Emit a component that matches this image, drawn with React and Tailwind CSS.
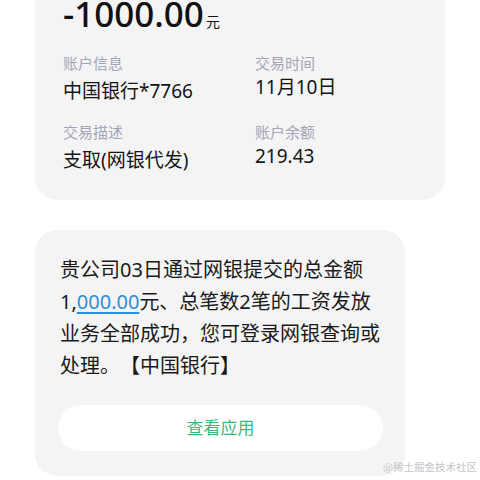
import React from 'react';

const font = { fontFamily: '"Noto Sans", "Noto Sans CJK SC", sans-serif' };

const fields = [
  { label: '账户信息', value: '中国银行*7766', shift: 'mt-[4px]' },
  { label: '交易时间', value: '11月10日', shift: 'mt-0' },
  { label: '交易描述', value: '支取(网银代发)', shift: 'mt-[4px]' },
  { label: '账户余额', value: '219.43', shift: 'mt-0' },
];

const App = () => {
  return (
    <div className="relative w-[480px] h-[480px] overflow-hidden bg-white" style={font}>
      {/* transaction card, top is scrolled off */}
      <div className="ml-[35px] w-[410px] -mt-[40px] rounded-[22px] bg-[#f4f4f4] pl-[28px] pt-[34px] pb-[27px]">
        <div className="flex items-baseline text-[#111]">
          <span className="text-[35px] leading-[40px] font-medium">-1000.00</span>
          <span className="text-[14px] ml-[2px]">元</span>
        </div>
        <div className="grid grid-cols-[192px_1fr] gap-y-[17px] mt-[18px]">
          {fields.map((f) => (
            <div key={f.label} className="flex flex-col">
              <span className="text-[15px] leading-[22px] text-[#a3a6b6]">{f.label}</span>
              <span className={`text-[19px] leading-[26px] text-[#151515] ${f.shift}`}>{f.value}</span>
            </div>
          ))}
        </div>
      </div>

      {/* sms card */}
      <div className="ml-[35px] mt-[30px] w-[370px] rounded-[22px] bg-[#f4f4f4] pl-[25px] pr-[22px] pt-[24px] pb-[25px]">
        <p className="text-[20px] leading-[32px] text-[#1a1a1a] whitespace-nowrap [text-spacing-trim:space-all]">
          贵公司03日通过网银提交的总金额
          <br />
          1,<span className="text-[#2b8fe0] underline underline-offset-[3px]">000.00</span>元、总笔数2笔的工资发放
          <br />
          业务全部成功，您可登录网银查询或
          <br />
          处理。【中国银行】
        </p>
        <button className="mt-[23px] -ml-[2px] w-[325px] h-[46px] rounded-full bg-white text-[17px] text-[#3bb77a]">
          查看应用
        </button>
      </div>

      {/* watermark */}
      <span
        className="absolute right-[3px] bottom-[5px] text-[10.5px] text-[#c4c4c4]"
        style={{ fontFamily: '"Noto Sans CJK SC", serif' }}
      >
        @稀土掘金技术社区
      </span>
    </div>
  );
};

export default App;
